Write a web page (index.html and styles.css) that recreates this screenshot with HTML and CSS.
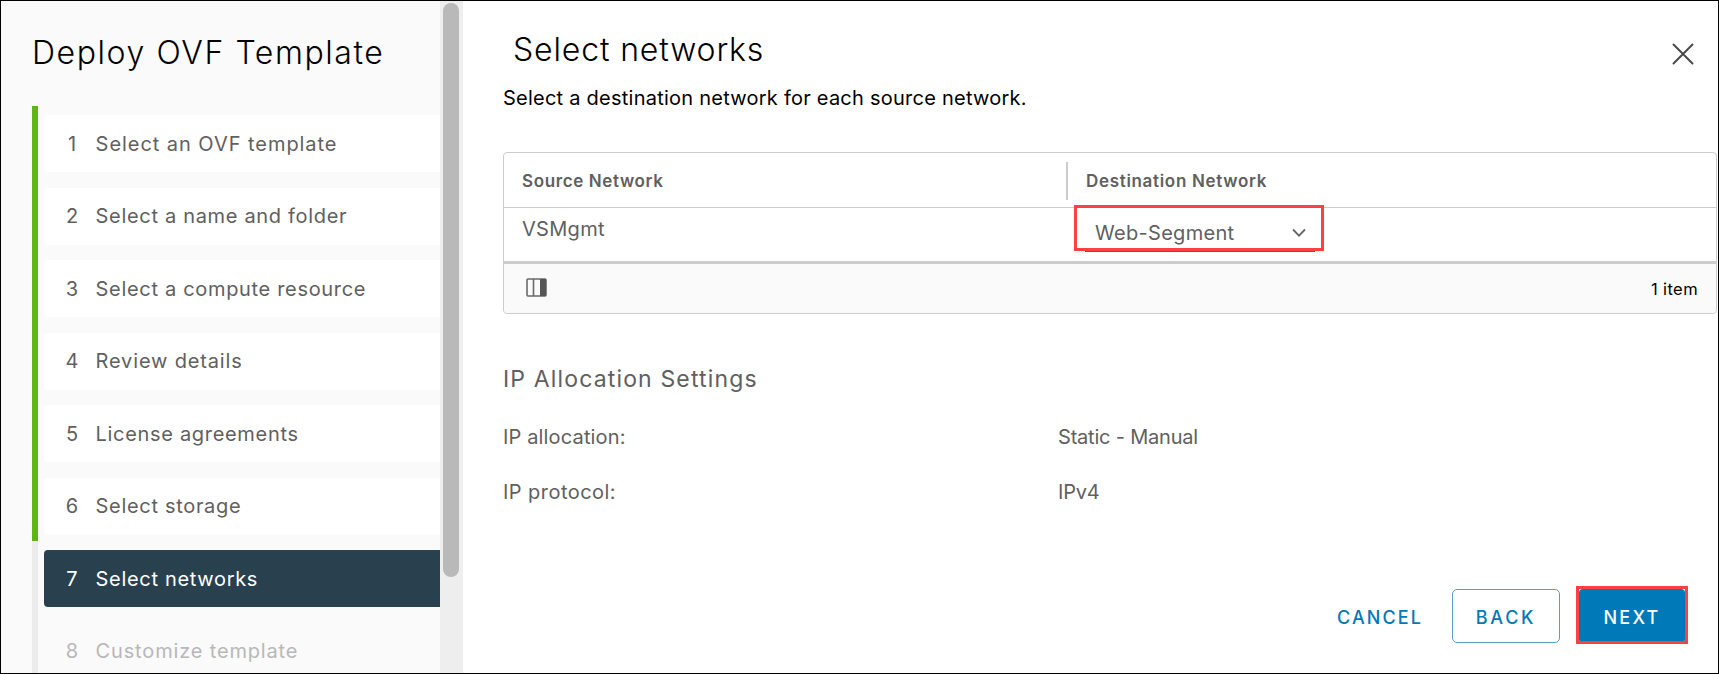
FILE: index.html
```html
<!DOCTYPE html>
<html lang="en">
<head>
<meta charset="utf-8">
<title>Deploy OVF Template</title>
<link rel="stylesheet" href="styles.css">
</head>
<body>
<div class="wizard">
  <aside class="sidebar">
    <nav class="nav">
      <h1 class="nav-title">Deploy OVF Template</h1>
      <ol class="steps">
        <li class="step done"><div class="step-card"><span class="num">1</span><span class="label l1">Select an OVF template</span></div></li>
        <li class="step done"><div class="step-card"><span class="num">2</span><span class="label">Select a name and folder</span></div></li>
        <li class="step done"><div class="step-card"><span class="num">3</span><span class="label">Select a compute resource</span></div></li>
        <li class="step done"><div class="step-card"><span class="num">4</span><span class="label l4">Review details</span></div></li>
        <li class="step done"><div class="step-card"><span class="num">5</span><span class="label">License agreements</span></div></li>
        <li class="step done"><div class="step-card"><span class="num">6</span><span class="label">Select storage</span></div></li>
        <li class="step active"><div class="step-card"><span class="num">7</span><span class="label">Select networks</span></div></li>
        <li class="step disabled"><div class="step-card"><span class="num">8</span><span class="label l4">Customize template</span></div></li>
      </ol>
    </nav>
    <div class="scroll-track"><div class="scroll-thumb"></div></div>
  </aside>

  <main class="content">
    <header class="head">
      <h2 class="page-title">Select networks</h2>
      <svg class="close" width="22" height="22" viewBox="0 0 22 22"><path d="M1.5 1.5 20.5 20.5M20.5 1.5 1.5 20.5" fill="none" stroke="#4a4a4a" stroke-width="2" stroke-linecap="round"/></svg>
    </header>
    <p class="subtitle">Select a destination network for each source network.</p>

    <section class="grid">
      <div class="grid-head">
        <div class="col-source th">Source Network</div>
        <div class="col-dest th th-dest">Destination Network</div>
      </div>
      <div class="grid-row">
        <div class="col-source cell">VSMgmt</div>
        <div class="col-dest">
          <div class="select">
            <span class="select-value">Web-Segment</span>
            <svg width="16" height="10" viewBox="0 0 16 10"><path d="M2 1.5 8 7.7 14 1.5" fill="none" stroke="#666" stroke-width="1.8"/></svg>
            <span class="mark mark-select"></span>
          </div>
        </div>
      </div>
      <div class="grid-foot">
        <svg class="columns" width="21" height="19" viewBox="0 0 21 19"><rect x="1" y="1" width="19" height="17" rx="1" fill="#fafafa" stroke="#6a6a6a" stroke-width="1.6"/><path d="M7.5 1V18" stroke="#6a6a6a" stroke-width="1.6"/><path d="M14 1H20V18H14Z" fill="#565656"/></svg>
        <span class="count">1 item</span>
      </div>
    </section>

    <h3 class="section-title">IP Allocation Settings</h3>
    <dl class="props">
      <dt>IP allocation:</dt><dd class="manual">Static - Manual</dd>
      <dt class="proto">IP protocol:</dt><dd class="tight">IPv4</dd>
    </dl>

    <footer class="actions">
      <button class="btn cancel">CANCEL</button>
      <button class="btn back">BACK</button>
      <button class="btn next">NEXT<span class="mark mark-next"></span></button>
    </footer>
  </main>
</div>
</body>
</html>
```
FILE: styles.css
```css
* { box-sizing: border-box; }

body {
  margin: 0;
  font-family: Inter, "Liberation Sans", sans-serif;
  color: #606060;
  background: #fff;
}

h1, h2, h3, p, ol, dl, dd { margin: 0; padding: 0; font-weight: 300; }

.wizard {
  display: flex;
  width: 1719px;
  height: 674px;
  border: 1px solid #000;
  overflow: hidden;
}

/* Sidebar */
.sidebar { display: flex; width: 462px; background: #fafafa; }

.nav { width: 439px; padding: 32px 0 0 31px; }

.nav-title {
  height: 73px;
  font-size: 32px;
  line-height: 40px;
  letter-spacing: 1.58px;
  color: #000;
  white-space: nowrap;
}

.steps { list-style: none; font-weight: 400; }

.step {
  height: 72.5px;
  padding: 9.2px 0 6.3px 6px;
  border-left: 6px solid #ececec;
}
.step.done { border-color: #60b515; }

.step-card {
  display: flex;
  align-items: center;
  height: 57px;
  padding-left: 21px;
  border-radius: 4px 0 0 4px;
  font-size: 20px;
  letter-spacing: 0.68px;
  white-space: nowrap;
}
.done .step-card { background: #fff; }
.active .step-card { background: #29414e; color: #fff; }
.disabled .step-card { color: #b8b8b8; }

.num { width: 14px; margin-right: 16.6px; text-align: center; letter-spacing: 0; }
.l1 { letter-spacing: 0.95px; }
.l4 { letter-spacing: 0.84px; }

.scroll-track { width: 23px; padding: 2px 0 0 3px; background: #eee; }
.scroll-thumb { width: 16px; height: 574px; border-radius: 8px; background: #b9b9b9; }

/* Main panel */
.content { flex: 1; padding: 29px 0 0 40px; }

.head { display: flex; justify-content: space-between; height: 56px; padding: 0 24px 0 10px; }
.page-title { font-size: 32px; line-height: 40px; letter-spacing: 0.85px; color: #000; }
.close { margin-top: 13px; }

.subtitle { height: 66px; font-size: 20px; line-height: 24px; letter-spacing: 0.24px; font-weight: 400; color: #000; }

.grid {
  width: 1214px;
  height: 162px;
  border: 1px solid #ccc;
  border-radius: 4px;
}

.col-source { width: 562px; padding-left: 18px; }
.col-dest { flex: 1; }

.grid-head { display: flex; align-items: center; height: 55px; padding-top: 1px; border-bottom: 1px solid #ccc; }
.th { font-size: 17px; font-weight: 600; letter-spacing: 0.62px; }
.th-dest { height: 38px; padding-left: 18px; border-left: 2px solid #ccc; line-height: 38px; letter-spacing: 0.68px; }

.grid-row { display: flex; height: 53px; }
.cell { padding-top: 9px; font-size: 20px; line-height: 24px; letter-spacing: 0.3px; }

.select {
  position: relative;
  display: flex;
  align-items: center;
  justify-content: space-between;
  width: 230px;
  height: 44px;
  margin-left: 19px;
  padding: 8px 8px 0 10px;
  border-bottom: 2px solid #0079b8;
  font-size: 20px;
  letter-spacing: 0.3px;
}

.grid-foot {
  display: flex;
  align-items: center;
  justify-content: space-between;
  height: 52px;
  padding: 0 18px 0 22px;
  border-top: 3px solid #ccc;
  background: #fafafa;
  border-radius: 0 0 4px 4px;
}
.columns { margin-bottom: 3px; }
.count { font-size: 16.5px; letter-spacing: 0.4px; color: #000; }

.section-title { margin-top: 51px; font-size: 23px; line-height: 28px; letter-spacing: 1.15px; font-weight: 400; }

.props {
  display: grid;
  grid-template-columns: 555px 1fr;
  row-gap: 31px;
  margin-top: 32px;
  font-size: 20px;
  line-height: 24px;
  letter-spacing: 0.15px;
  font-weight: 400;
}
.props dd { font-weight: 400; }
.props .proto { letter-spacing: 0.45px; }
.props .manual, .props .tight { letter-spacing: -0.2px; }

/* Footer buttons */
.actions { display: flex; justify-content: flex-end; align-items: center; height: 54px; margin-top: 85px; padding-right: 33px; }

.btn {
  position: relative;
  height: 54px;
  padding: 2px 0 0;
  border: 0;
  background: none;
  font: 500 18px Inter, "Liberation Sans", sans-serif;
  color: #0079b8;
}
.cancel { margin-right: 29px; letter-spacing: 2.1px; }
.back { width: 108px; margin-right: 19px; border: 1.5px solid #5a9fc6; border-radius: 5px; letter-spacing: 2.7px; }
.next { width: 106px; border-radius: 4px; background: #0079b8; color: #fff; letter-spacing: 2.2px; }

/* Red highlight frames drawn over controls */
.mark { position: absolute; border: 3px solid #ff4040; }
.mark-select { left: -11px; top: -3px; width: 250px; height: 46px; }
.mark-next { left: -3px; top: -3px; width: 112px; height: 58px; }
```
